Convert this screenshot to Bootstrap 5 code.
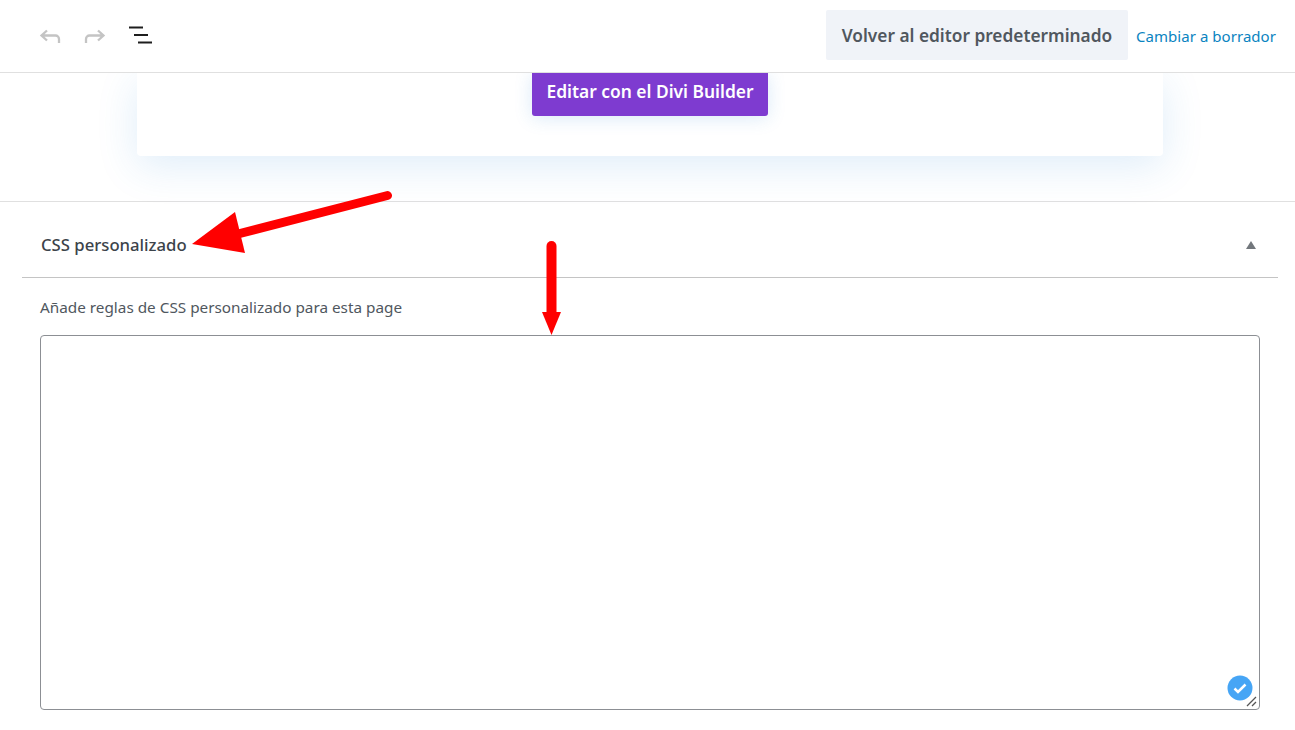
<!DOCTYPE html>
<html lang="es">
<head>
<meta charset="utf-8">
<title>CSS personalizado</title>
<link rel="stylesheet" href="https://cdn.jsdelivr.net/npm/bootstrap@5.3.0/dist/css/bootstrap.min.css">
<style>
html,body{height:730px;overflow:hidden;background:#fff}
body{font-family:"Noto Sans","Open Sans",sans-serif;color:#3c434a;position:relative}
.topbar{height:73px;border-bottom:1px solid #e0e0e0;padding:0 19px 0 38px;background:#fff;position:relative;z-index:2}
.tool-ico{display:block}
.undo-wrap{width:26px;margin-right:19px}
.menu-ico{margin-left:1px}
.back-btn{height:50px;width:302px;background:#f0f3f8;border:0;border-radius:2px;color:#50575e;font-size:17.3px;font-weight:600;padding:2px 0 0;margin-bottom:3px;white-space:nowrap}
.draft-link{color:#0a84c1;font-size:15px;text-decoration:none;margin-left:8px;letter-spacing:.05px}
.builder-zone{height:129px;border-bottom:1px solid #e0e0e0;padding:0 132px 0 137px}
.builder-box{height:83px;background:#fff;border-radius:0 0 4px 4px;box-shadow:0 10px 40px rgba(43,135,218,.15)}
.divi-btn{height:43px;width:236px;background:#7e3bd0;color:#fff;border:0;border-radius:0 0 3px 3px;font-size:17.4px;font-weight:600;padding:0 0 6px;box-shadow:0 2px 18px rgba(43,135,218,.18)}
.panel-head{height:76px;margin:0 17px 0 22px;border-bottom:1px solid #c4c4c4;padding:0 21px 0 19px}
.panel-title{font-size:16.7px;font-weight:500;color:#3c434a;margin:0;padding-top:11px}
.tri{width:0;height:0;border-left:5.5px solid transparent;border-right:5.5px solid transparent;border-top:0;border-bottom:8px solid #72777c;margin-top:10px;margin-right:1px}
.panel-body{padding:19px 35px 0 40px}
.hint{font-size:15.3px;color:#50575e;line-height:21px;margin-bottom:17px}
.css-area{display:block;width:1220px;height:375px;border:1px solid #8c8f94;border-radius:4px;resize:none;background:#fff;padding:8px}
.ok-mark{position:absolute;left:1227px;top:675px}
.grip{position:absolute;left:1246px;top:696px}
.arrow-layer{position:absolute;left:0;top:0;pointer-events:none;z-index:3}
</style>
</head>
<body>
<header class="topbar d-flex align-items-center">
  <div class="undo-wrap">
    <svg class="tool-ico" width="24" height="24" viewBox="0 0 24 24" fill="none" stroke="#c4c4c4" stroke-width="2.300"><path d="M9 6.500 3.500 11.500 9 16.500M3.500 11.500H17.500a3.500 3.500 0 0 1 3.500 3.500V19"/></svg>
  </div>
  <div class="undo-wrap">
    <svg class="tool-ico" width="24" height="24" viewBox="0 0 24 24" fill="none" stroke="#c4c4c4" stroke-width="2.300"><path d="M15 6.500 20.500 11.500 15 16.500M20.500 11.500H6.500a3.500 3.500 0 0 0-3.500 3.500V19"/></svg>
  </div>
  <svg class="tool-ico menu-ico" width="24" height="24" viewBox="0 0 24 24" fill="none" stroke="#1e1e1e" stroke-width="2"><path d="M0 3.500H14M5 11H19M9 18.500H23"/></svg>
  <div class="ms-auto d-flex align-items-center">
    <button type="button" class="back-btn">Volver al editor predeterminado</button>
    <a href="#" class="draft-link">Cambiar a borrador</a>
  </div>
</header>

<section class="builder-zone">
  <div class="builder-box d-flex justify-content-center">
    <button type="button" class="divi-btn">Editar con el Divi Builder</button>
  </div>
</section>

<section>
  <div class="panel-head d-flex align-items-center justify-content-between">
    <h2 class="panel-title">CSS personalizado</h2>
    <span class="tri"></span>
  </div>
  <div class="panel-body">
    <p class="hint">Añade reglas de CSS personalizado para esta page</p>
    <textarea class="css-area" aria-label="CSS personalizado"></textarea>
  </div>
</section>

<svg class="ok-mark" width="26" height="26" viewBox="0 0 26 26"><circle cx="13" cy="13" r="12.500" fill="#46a5f5"/><path d="M7.500 13.500 11 17 18.500 9.500" fill="none" stroke="#fff" stroke-width="2.500"/></svg>
<svg class="grip" width="12" height="12" viewBox="0 0 12 12" fill="none" stroke="#555" stroke-width="1.300"><path d="M1 10 10 1M6 10 10 6"/></svg>

<svg class="arrow-layer" width="1295" height="730" viewBox="0 0 1295 730">
  <path d="M387.500 195.500 234 235" stroke="#f00" stroke-width="9" stroke-linecap="round" fill="none"/>
  <path d="M192 244 235 212 245 253Z" fill="#f00"/>
  <path d="M551.500 246V315" stroke="#f00" stroke-width="10" stroke-linecap="round" fill="none"/>
  <path d="M542 312H561L551.500 335Z" fill="#f00"/>
</svg>
</body>
</html>
